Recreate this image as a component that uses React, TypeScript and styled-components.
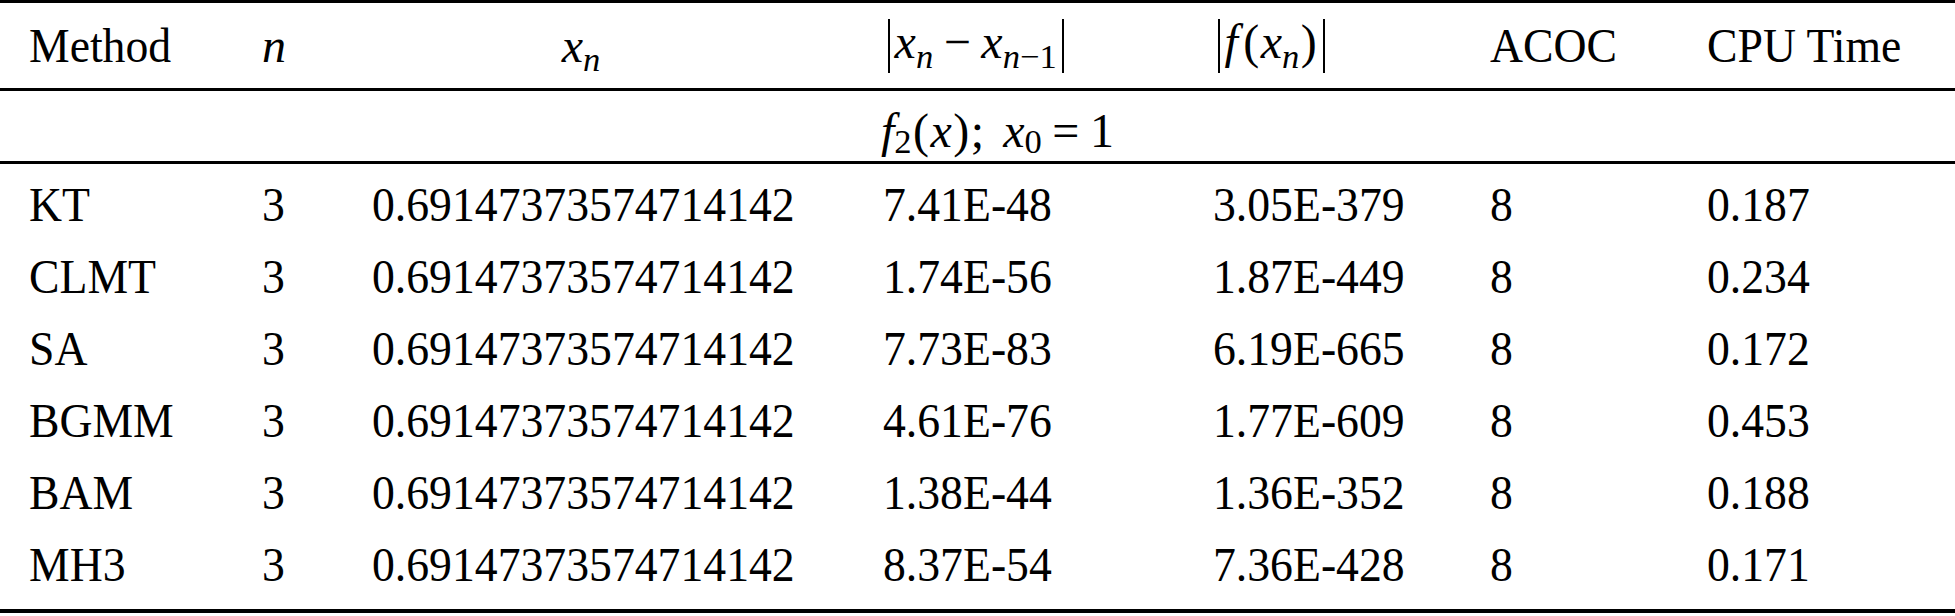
import React from "react";
import styled, { createGlobalStyle } from "styled-components";

const GlobalStyle = createGlobalStyle`
  html, body {
    margin: 0;
    padding: 0;
    background: #ffffff;
  }
`;

type Row = {
  method: string;
  n: number;
  xn: string;
  diff: string;
  fx: string;
  acoc: number;
  cpu: string;
};

const rows: Row[] = [
  { method: "KT", n: 3, xn: "0.69147373574714142", diff: "7.41E-48", fx: "3.05E-379", acoc: 8, cpu: "0.187" },
  { method: "CLMT", n: 3, xn: "0.69147373574714142", diff: "1.74E-56", fx: "1.87E-449", acoc: 8, cpu: "0.234" },
  { method: "SA", n: 3, xn: "0.69147373574714142", diff: "7.73E-83", fx: "6.19E-665", acoc: 8, cpu: "0.172" },
  { method: "BGMM", n: 3, xn: "0.69147373574714142", diff: "4.61E-76", fx: "1.77E-609", acoc: 8, cpu: "0.453" },
  { method: "BAM", n: 3, xn: "0.69147373574714142", diff: "1.38E-44", fx: "1.36E-352", acoc: 8, cpu: "0.188" },
  { method: "MH3", n: 3, xn: "0.69147373574714142", diff: "8.37E-54", fx: "7.36E-428", acoc: 8, cpu: "0.171" },
];

export default function App() {
  return (
    <>
      <GlobalStyle />
      <Table>
        <HeaderRow>
          <Cell>Method</Cell>
          <Cell $math>
            <I>n</I>
          </Cell>
          <CenterCell $math>
            <I>x</I>
            <Sub>
              <I>n</I>
            </Sub>
          </CenterCell>
          <Cell $math>
            <Bar />
            <I>x</I>
            <Sub>
              <I>n</I>
            </Sub>
            <Op>−</Op>
            <I>x</I>
            <Sub>
              <I>n</I>−1
            </Sub>
            <Bar />
          </Cell>
          <Cell $math>
            <Bar />
            <F>f</F>
            <Paren>(</Paren>
            <I>x</I>
            <Sub>
              <I>n</I>
            </Sub>
            <Paren>)</Paren>
            <Bar />
          </Cell>
          <Cell>ACOC</Cell>
          <Cell>CPU Time</Cell>
        </HeaderRow>

        <CaseRow>
          <I>f</I>
          <Sub>2</Sub>
          <Paren>(</Paren>
          <I>x</I>
          <Paren>)</Paren>;<Gap />
          <I>x</I>
          <Sub>0</Sub>
          <Op>=</Op>1
        </CaseRow>

        <Body>
          {rows.map((r) => (
            <DataRow key={r.method}>
              <Cell>{r.method}</Cell>
              <Cell>{r.n}</Cell>
              <Cell>{r.xn}</Cell>
              <Cell>{r.diff}</Cell>
              <Cell>{r.fx}</Cell>
              <Cell>{r.acoc}</Cell>
              <Cell>{r.cpu}</Cell>
            </DataRow>
          ))}
        </Body>
      </Table>
    </>
  );
}

const Table = styled.div`
  width: 1955px;
  font-family: "Liberation Serif", "Times New Roman", serif;
  font-size: 48px;
  line-height: 48px;
  color: #000000;
  border-top: 3px solid #000000;
  border-bottom: 4px solid #000000;
`;

const GridRow = styled.div`
  display: grid;
  grid-template-columns: 233px 110px 511px 330px 277px 217px 1fr;
  align-items: center;
  padding-left: 29px;
`;

const HeaderRow = styled(GridRow)`
  height: 85px;
  border-bottom: 3px solid #000000;
`;

const CaseRow = styled.div`
  height: 73px;
  display: flex;
  align-items: center;
  justify-content: center;
  padding-left: 40px;
  padding-top: 10px;
  box-sizing: border-box;
  white-space: pre;
  border-bottom: 3px solid #000000;
`;

const Body = styled.div`
  padding: 5px 0 8px;
`;

const DataRow = styled(GridRow)`
  height: 72px;
`;

/* the source typeface is a touch narrower than Liberation Serif */
const Cell = styled.div<{ $math?: boolean }>`
  white-space: nowrap;
  transform: ${(p) => (p.$math ? "none" : "scaleX(0.952)")};
  transform-origin: left center;
`;

const CenterCell = styled(Cell)`
  width: 418px;
  text-align: center;
`;

const I = styled.i`
  font-style: italic;
`;

const F = styled(I)`
  margin-right: 0.08em;
`;

const Paren = styled.span`
  margin: 0 0.03em;
`;

const Gap = styled.span`
  display: inline-block;
  width: 0.4em;
`;

const Sub = styled.span`
  position: relative;
  top: 0.28em;
  font-size: 0.72em;
  line-height: 0;
`;

const Op = styled.span`
  padding: 0 0.22em;
`;

const Bar = styled.span`
  display: inline-block;
  width: 2px;
  height: 1.12em;
  margin: 0 0.1em;
  background: #000000;
  vertical-align: -0.3em;
`;
